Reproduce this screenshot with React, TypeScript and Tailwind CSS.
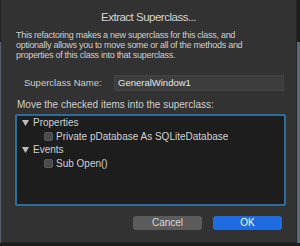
import React from 'react';

const font = { fontFamily: '"Liberation Sans", Arial, sans-serif' };

const Checkbox = () => (
  <span className="inline-block w-[9px] h-[9px] rounded-[2px] bg-[#4a4a4a] border border-[#5a5a5a]" />
);

const Caret = () => (
  <svg width="7" height="6" viewBox="0 0 7 6" className="shrink-0">
    <path d="M0 0 L7 0 L3.5 6 Z" fill="#bdbdbd" />
  </svg>
);

export default function App() {
  return (
    <div className="w-[300px] h-[246px] bg-[#1c1c1c] flex flex-col overflow-hidden" style={font}>
      <div className="flex h-[243px]">
        <div className="w-px flex flex-col">
          <div className="h-[42px] bg-[#232323]" />
          <div className="flex-1 bg-[#55606c]" />
        </div>
        <div className="w-[296px] bg-[#323232] border-r border-b border-[#262626] flex flex-col text-[#d6d6d6]">
          <div className="pt-[10px] text-center text-[11.5px] leading-[14px] tracking-[-0.5px]">Extract Superclass...</div>
          <p className="pl-[15px] mt-[6px] text-[9px] leading-[10px] tracking-[-0.28px] whitespace-nowrap text-[#cfcfcf]">
            This refactoring makes a new superclass for this class, and
            <br />
            optionally allows you to move some or all of the methods and
            <br />
            properties of this class into that superclass.
          </p>
          <div className="flex items-center mt-[15px] h-[16px]">
            <span className="pl-[23px] w-[113px] text-[9.5px] text-[#cfcfcf]">Superclass Name:</span>
            <div className="w-[170px] h-[16px] bg-[#3d3d3d] border border-[#444] flex items-center pl-[3px] text-[9.5px] text-[#e6e6e6]">
              GeneralWindow1
            </div>
          </div>
          <div className="pl-[16px] mt-[8px] text-[10px] leading-[12px] text-[#cfcfcf]">Move the checked items into the superclass:</div>
          <div className="ml-[14px] mt-[3px] w-[271px] h-[92px] border-2 border-[#2b6e9e] rounded-[2px] bg-[#1d1d1d] text-[10px] text-[#d2d2d2]">
            <div className="flex items-center h-[13px] pl-[5px] gap-[4px]">
              <Caret />
              <span>Properties</span>
            </div>
            <div className="flex items-center h-[14px] pl-[27px] gap-[3px]">
              <Checkbox />
              <span>Private pDatabase As SQLiteDatabase</span>
            </div>
            <div className="flex items-center h-[13px] pl-[5px] gap-[4px]">
              <Caret />
              <span>Events</span>
            </div>
            <div className="flex items-center h-[14px] pl-[27px] gap-[3px]">
              <Checkbox />
              <span>Sub Open()</span>
            </div>
          </div>
          <div className="flex justify-end gap-[11px] pr-[14px] mt-[10px]">
            <button className="w-[69px] h-[14px] rounded-[3px] bg-[#5b5b5b] text-[10px] leading-[14px] text-[#d8d8d8]">Cancel</button>
            <button className="w-[69px] h-[14px] rounded-[3px] bg-[#1f6be0] text-[10px] leading-[14px] text-white">OK</button>
          </div>
        </div>
        <div className="w-[3px] flex flex-col">
          <div className="h-[42px] bg-[#1e1e1e]" />
          <div className="flex-1 bg-[#5b6876]" />
        </div>
      </div>
      <div className="flex-1 bg-[#1c1c1c]" />
    </div>
  );
}
